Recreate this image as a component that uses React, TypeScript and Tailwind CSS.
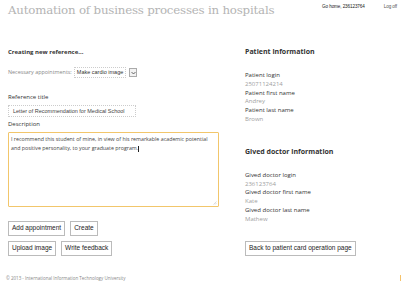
export default function App() {
  return (
    <div className="w-[401px] h-[285px] bg-white flex flex-col overflow-hidden font-['Open_Sans',sans-serif] text-[#333]">
      {/* Header */}
      <header className="flex items-start justify-between pl-2 pr-[4px] pt-[2px] h-[47px]">
        <h1 className="font-['DejaVu_Serif',serif] text-[11.8px] leading-[16px] text-[#b4b4b4] tracking-[-0.2px] font-light">
          Automation of business processes in hospitals
        </h1>
        <div className="flex gap-[19px] text-[4.6px] leading-[8px] mt-[1px] font-['Liberation_Sans',sans-serif] tracking-[-0.1px]">
          <span className="text-[#222]">Go home, 236123764</span>
          <span className="text-[#555]">Log off</span>
        </div>
      </header>

      <main className="flex flex-1">
        {/* Left column */}
        <section className="w-[245px] pl-2">
          <h2 className="text-[6px] font-bold leading-[10px]">Creating new reference...</h2>

          <div className="flex items-center mt-[10px] h-[11px]">
            <span className="text-[5.4px] text-[#888] mr-[2px]">Necessary appointments:</span>
            <div className="h-[11px] border border-dotted border-[#ccc] px-[2px] flex items-center text-[5.5px] text-[#333] font-['Liberation_Sans',sans-serif]">
              Make cardio image
            </div>
            <div className="ml-[3px] w-[8px] h-[9px] border border-[#aaa] bg-[#f2f2f2] flex items-center justify-center">
              <svg width="5" height="4" viewBox="0 0 5 4">
                <path d="M0.5 1 L2.5 3 L4.5 1" fill="none" stroke="#444" strokeWidth="0.8" />
              </svg>
            </div>
          </div>

          <div className="text-[6px] leading-[9px] mt-[15px]">Reference title</div>
          <div className="mt-[3px] w-[128px] h-[12px] border border-dotted border-[#ccc] px-[4px] flex items-center text-[5.5px] text-[#444] font-['Liberation_Sans',sans-serif]">
            Letter of Recommendation for Medical School
          </div>

          <div className="text-[6px] leading-[9px] mt-[3px]">Description</div>
          <div className="mt-[3px] w-[211px] h-[75px] border border-[#f2c66b] rounded-[1px] px-[2px] pt-[2px] text-[5.3px] leading-[9px] text-[#444] relative">
            I recommend this student of mine, in view of his remarkable academic potential and positive personality, to your graduate program.
            <span className="inline-block w-[0.5px] h-[6px] bg-[#222] align-middle"></span>
            <svg className="absolute right-[1px] bottom-[1px]" width="4" height="4" viewBox="0 0 4 4">
              <path d="M0.5 3.5 L3.5 0.5 M2 3.5 L3.5 2" stroke="#bbb" strokeWidth="0.5" />
            </svg>
          </div>

          <div className="flex gap-[5px] mt-[14px]">
            <Btn>Add appointment</Btn>
            <Btn>Create</Btn>
          </div>
          <div className="flex gap-[5px] mt-[5px]">
            <Btn>Upload image</Btn>
            <Btn>Write feedback</Btn>
          </div>
        </section>

        {/* Right column */}
        <section className="flex-1">
          <h2 className="text-[7px] font-bold leading-[10px]">Patient information</h2>
          <dl className="mt-[14px] text-[6px] leading-[8.8px]">
            <dt>Patient login</dt>
            <dd className="text-[#a0a0a0]">25071124214</dd>
            <dt>Patient first name</dt>
            <dd className="text-[#a0a0a0]">Andrey</dd>
            <dt>Patient last name</dt>
            <dd className="text-[#a0a0a0]">Brown</dd>
          </dl>

          <h2 className="text-[7px] font-bold leading-[10px] mt-[23px]">Gived doctor information</h2>
          <dl className="mt-[14px] text-[6px] leading-[8.8px]">
            <dt>Gived doctor login</dt>
            <dd className="text-[#a0a0a0]">236123764</dd>
            <dt>Gived doctor first name</dt>
            <dd className="text-[#a0a0a0]">Kate</dd>
            <dt>Gived doctor last name</dt>
            <dd className="text-[#a0a0a0]">Mathew</dd>
          </dl>

          <div className="mt-[17px] flex">
            <Btn>Back to patient card operation page</Btn>
          </div>
        </section>
      </main>

      <footer className="flex items-end justify-between pl-[6px] pr-0 pb-[3px]">
        <span className="text-[4.5px] text-[#888]">© 2013 - International Information Technology University</span>
        <span className="w-[1px] h-[6px] bg-[#f5c26b] mb-[1px]"></span>
      </footer>
    </div>
  );
}

function Btn({ children }: { children: React.ReactNode }) {
  return (
    <button className="h-[15px] px-[3px] border border-[#bbb] bg-white text-[6.5px] text-[#222] font-['Liberation_Sans',sans-serif] leading-none">
      {children}
    </button>
  );
}
